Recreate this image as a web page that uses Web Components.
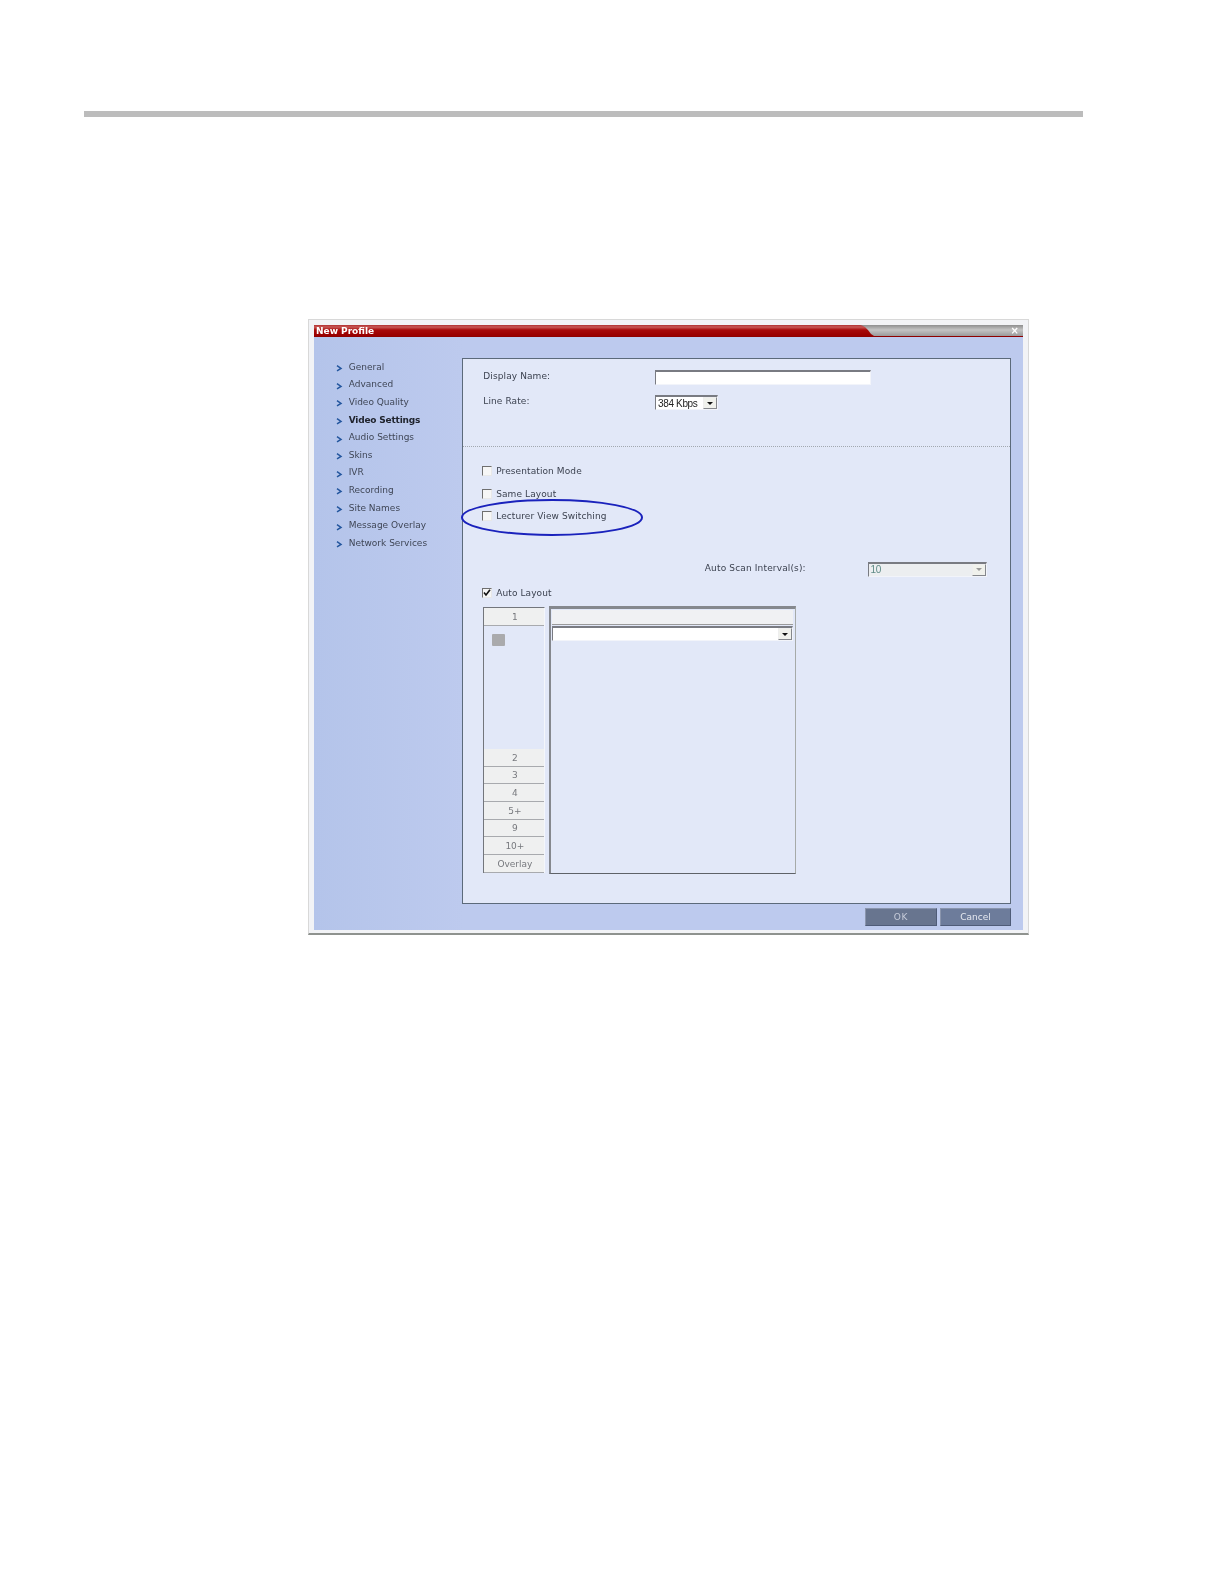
<!DOCTYPE html>
<html><head><meta charset="utf-8"><style>
html,body{margin:0;padding:0;background:#fff}
body{width:1224px;height:1584px;overflow:hidden;font-family:"DejaVu Sans",sans-serif;font-size:9px;color:#3c4250}
</style></head><body>
<page-rule></page-rule>
<profile-dialog>
  <nav-list slot="nav">
    <nav-item>General</nav-item><nav-item>Advanced</nav-item><nav-item>Video Quality</nav-item>
    <nav-item active>Video Settings</nav-item><nav-item>Audio Settings</nav-item><nav-item>Skins</nav-item>
    <nav-item>IVR</nav-item><nav-item>Recording</nav-item><nav-item>Site Names</nav-item>
    <nav-item>Message Overlay</nav-item><nav-item>Network Services</nav-item>
  </nav-list>
  <settings-panel slot="panel"></settings-panel>
</profile-dialog>
<script>
function def(name,css,html){
  customElements.define(name,class extends HTMLElement{
    connectedCallback(){
      if(this.shadowRoot)return;
      const r=this.attachShadow({mode:'open'});
      r.innerHTML='<style>'+css+'</style>'+(typeof html==='function'?html(this):html);
    }
  });
}
const ARROW='<svg width="7" height="8" viewBox="0 0 7 8"><path d="M1 1.6 L5 4.4 L1 6.8" fill="none" stroke="#23569e" stroke-width="1.5"/></svg>';
def('page-rule',':host{display:block;margin:111px 0 0 84px;width:999px;height:6px;background:#bcbcbc}','');
def('nav-list',':host{display:flex;flex-direction:column;padding:21px 0 0 22px}','<slot></slot>');
def('nav-item',`:host{display:flex;align-items:center;height:17.6px;gap:5.7px;color:#3f4656;white-space:nowrap}
:host([active]){font-weight:bold;color:#20242e;letter-spacing:-.2px}
svg{margin-top:3px;flex:none}`,ARROW+'<span><slot></slot></span>');
def('profile-dialog',`:host{display:block;box-sizing:border-box;margin:202px 0 0 308px;width:721px;height:616px;background:#f2f3f6;border:1px solid #d8d8d8;border-bottom:2px solid #8f938f;padding:5px 5px 3.5px 5px}
.win{height:100%;display:flex;flex-direction:column;background:#bccaec;filter:blur(.4px)}
.bar{flex:none;position:relative;box-sizing:border-box;height:12px;background:linear-gradient(#b03030 0,#c85a58 2px,#a80a0a 5px,#9a0000 10px);border-bottom:1px solid #8f0000;color:#fff;font-weight:bold;font-size:9px;line-height:12px;padding-left:2px}
.gray{position:absolute;right:0;top:0;width:163px;height:11px;background:linear-gradient(#8f8f8f,#c4c4c4 45%,#9a9a9a);clip-path:polygon(0 0,100% 0,100% 100%,14px 100%,11px 9px,8px 5px,5px 2px,2px .5px)}
.x{position:absolute;right:4px;top:0;color:#fff;font-size:10px;line-height:12px;font-weight:bold}
.body{flex:1;display:grid;grid-template-columns:148px 549px;align-items:start;background:linear-gradient(90deg,#b4c4ea,#bdcaee 150px)}
.panelwrap{padding-top:21px}`,`<div class="win"><div class="bar"><span>New Profile</span><div class="gray"></div><div class="x">×</div></div>
<div class="body"><div><slot name="nav"></slot></div><div class="panelwrap"><slot name="panel"></slot></div></div></div>`);
def('check-row',`:host{display:flex;align-items:center;gap:4px;height:12px;white-space:nowrap;color:#3c4250;letter-spacing:.1px}
i{box-sizing:border-box;display:block;width:10px;height:10px;background:#f6f6f6;border:1px solid;border-color:#6f6f6f #e8e8e8 #e8e8e8 #6f6f6f;position:relative}
svg{position:absolute;left:0;top:0}`,h=>'<i>'+(h.hasAttribute('checked')?'<svg width="8" height="8" viewBox="0 0 8 8"><path d="M1 3.5 L3 6 L7 .8" fill="none" stroke="#111" stroke-width="1.6"/></svg>':'')+'</i><span><slot></slot></span>');
def('drop-box',`:host{display:flex;box-sizing:border-box;height:15px;background:#fff;border:1px solid;border-color:#797b82 #f2f4fa #f2f4fa #797b82;border-top-width:2px;font:10px "Liberation Sans",sans-serif;letter-spacing:-.35px;color:#222;align-items:center;justify-content:space-between;padding:0 0 0 2px}
:host([disabled]){background:#eceef0;color:#5e8a86}
b{box-sizing:border-box;display:flex;align-items:center;justify-content:center;width:14px;height:12px;background:#f0f1ec;border:1px solid;border-color:#eeeeee #85878c #85878c #eeeeee}
b:before{content:"";border:3px solid transparent;border-top:3px solid #111;border-bottom:0}
:host([disabled]) b:before{border-top-color:#999}`,'<span><slot></slot></span><b></b>');
def('layout-tab',`:host{display:flex;align-items:center;justify-content:center;box-sizing:border-box;height:17.7px;background:#eff0f0;border-bottom:1px solid #a8aaae;color:#77797e;padding-left:2px;padding-top:1px}`,'<slot></slot>');
def('dialog-button',`:host{display:flex;align-items:center;justify-content:center;box-sizing:border-box;height:18px;background:#6d7c9b;border:1px solid;border-color:#8a95ad #4f5c78 #4f5c78 #8a95ad;color:#e6e9f0}
:host([dim]){background:#68758f;color:#c6cbd9;letter-spacing:.6px}`,'<slot></slot>');
def('settings-panel',`:host{display:block;position:relative;width:549px}
.box{box-sizing:border-box;width:549px;height:546px;background:#e2e8f8;border:1px solid #5c6a7a}
.top{box-sizing:border-box;height:88px;border-bottom:1px dotted #a2a8b0;display:grid;grid-template-columns:172px auto;grid-template-rows:15px 15px;row-gap:10px;padding:11px 0 0 20.3px;align-content:start;justify-content:start;line-height:12px;letter-spacing:.1px}
.in{box-sizing:border-box;width:216px;height:15px;margin-left:-.3px;background:#fff;border:1px solid;border-color:#797b82 #f2f4fa #f2f4fa #797b82;border-top-width:2px}
.top drop-box{margin-left:-.3px}
.checks{padding:18.3px 0 0 19.2px;display:flex;flex-direction:column;gap:10.4px}
.scan{display:flex;justify-content:flex-end;align-items:flex-start;gap:61.7px;padding:39.8px 23.5px 0 0;line-height:12px;letter-spacing:.15px}
.auto{padding:9.7px 0 0 19.2px}
.layout{display:flex;align-items:flex-start;gap:4px;padding:8.6px 0 0 19.5px}
.tabs{box-sizing:border-box;width:62.8px;border:solid #73767c;border-width:1px 1px 0 1.5px;border-right-color:#f4f6fb;display:flex;flex-direction:column}
.tabs .space{height:123.3px;padding:8.3px 0 0 8px;box-sizing:border-box}
.sq{display:block;width:13px;height:12px;background:#aaaaac;border-radius:1px}
.content{box-sizing:border-box;width:246.4px;height:268px;margin-top:-1.3px;border:solid #85888e;border-width:3px 1px 1px 2px;border-right-color:#a6aaa8;border-bottom-color:#5e6268;padding:1px 2px 0 1px}
.strip{height:14px;background:#f0f1f3;border-bottom:1px solid #9a9a9a}
.sel{margin:1.5px 0 0 0}
.foot{display:flex;justify-content:flex-end;gap:3.3px;padding-top:4px;width:549px}
.foot dialog-button:first-child{width:71.7px}.foot dialog-button:last-child{width:71px}
.oval{position:absolute;left:-2.5px;top:139.5px}`,`<div class="box">
<div class="top"><label>Display Name:</label><div class="in"></div><label>Line Rate:</label><drop-box style="width:63px">384 Kbps</drop-box></div>
<div class="checks"><check-row>Presentation Mode</check-row><check-row>Same Layout</check-row><check-row>Lecturer View Switching</check-row></div>
<div class="scan"><span>Auto Scan Interval(s):</span><drop-box disabled style="width:119px">10</drop-box></div>
<div class="auto"><check-row checked>Auto Layout</check-row></div>
<div class="layout"><div class="tabs"><layout-tab style="height:17.4px">1</layout-tab><div class="space"><span class="sq"></span></div>
<layout-tab>2</layout-tab><layout-tab>3</layout-tab><layout-tab>4</layout-tab><layout-tab>5+</layout-tab><layout-tab>9</layout-tab><layout-tab>10+</layout-tab><layout-tab>Overlay</layout-tab></div>
<div class="content"><div class="strip"></div><drop-box class="sel"></drop-box></div></div>
</div>
<div class="foot"><dialog-button dim>OK</dialog-button><dialog-button>Cancel</dialog-button></div>
<svg class="oval" width="184" height="39" viewBox="0 0 184 39"><ellipse cx="92" cy="19.5" rx="90" ry="17.5" fill="none" stroke="#1a22bc" stroke-width="2"/></svg>`);
</script>
</body></html>
